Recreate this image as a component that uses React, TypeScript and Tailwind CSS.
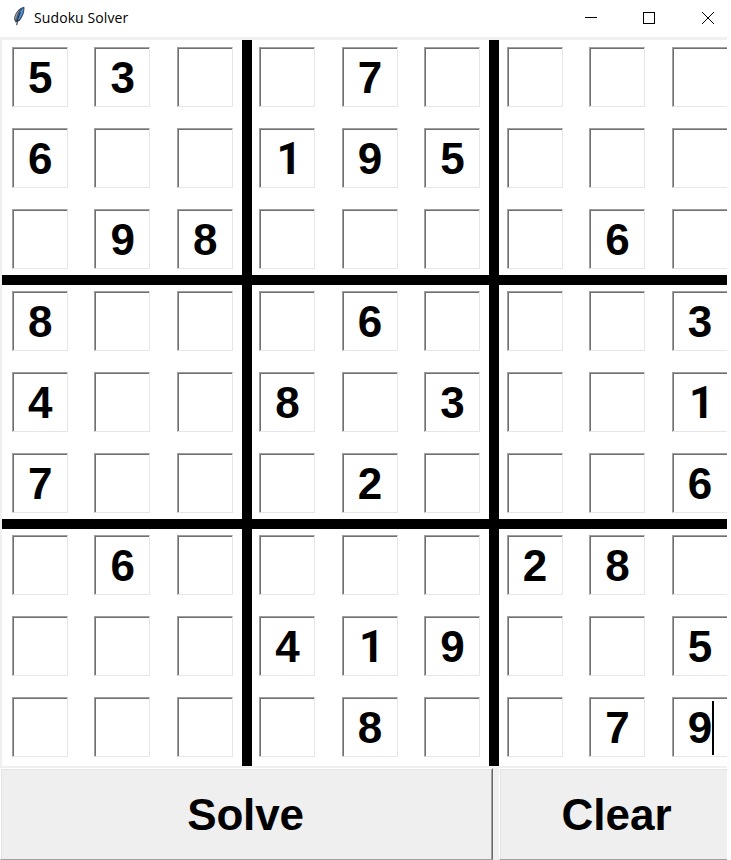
const puzzle = [
  '53..7....',
  '6..195...',
  '.98....6.',
  '8...6...3',
  '4..8.3..1',
  '7...2...6',
  '.6....28.',
  '...419..5',
  '....8..79',
];

const bandLeft = ['pl-[9.7px]', 'pl-[7.1px]', 'pl-[7.6px]'];
const bandTop = ['pt-[7px]', 'pt-[5.7px]', 'pt-[5.5px]'];

function Feather() {
  return (
    <svg className="ml-3 h-5 w-4 shrink-0" viewBox="0 0 16 20">
      <path d="M12.3 .8C7.5 1.6 2.6 6.6 2 13L3.6 16.5L7.5 15C10.8 11 13 6 12.3 .8Z" fill="#3b4a5a" />
      <path d="M11.4 2C8.4 4 5.8 9 4.6 14.5L7 13.8C9.9 10.2 11.8 6 11.4 2Z" fill="#4f8fdc" />
      <path d="M8 3.6C4.9 6 3 9.6 2.9 13L4.1 13.8C4.7 10.2 6 6.8 8 3.6Z" fill="#8d979e" />
      <path d="M8.4 6.5C6.5 9.8 5.3 14 4.8 19.2" fill="none" stroke="#17202b" strokeWidth="1" />
    </svg>
  );
}

function Cell({ value, focused }: { value: string; focused: boolean }) {
  return (
    <div className="flex h-[60px] w-14 border-t border-l border-[#a0a0a0] border-r border-b border-r-[#e6e6e6] border-b-[#e6e6e6]">
      <div className="flex w-full items-center justify-center border-t border-l border-[#707070] pt-px text-[44px] leading-none font-bold">
        <span className={value === '1' ? "pl-[3px] font-['Roboto',sans-serif]" : 'relative'}>
          {value === '.' ? '' : value}
          {focused && <span className="absolute top-[-5px] right-[-2px] h-[54px] w-[2px] bg-black" />}
        </span>
      </div>
    </div>
  );
}

function Box({ row, col }: { row: number; col: number }) {
  return (
    <div
      className={`grid grid-cols-[56px_56px_56px] content-start gap-x-[26.5px] gap-y-[21.2px] overflow-hidden bg-white ${bandLeft[col]} ${bandTop[row]}`}
    >
      {[0, 1, 2].flatMap((r) =>
        [0, 1, 2].map((c) => {
          const y = row * 3 + r;
          const x = col * 3 + c;
          return <Cell key={`${y}${x}`} value={puzzle[y][x]} focused={y === 8 && x === 8} />;
        }),
      )}
    </div>
  );
}

export default function App() {
  return (
    <div className="flex h-[860px] w-[731px] flex-col overflow-hidden bg-white font-['Liberation_Sans',Arial,sans-serif] text-black">
      <header className="flex h-[37px] shrink-0 items-start pt-[6px]">
        <Feather />
        <h1 className="mt-[2px] ml-[6px] w-[200px] font-['Open_Sans',sans-serif] text-[14px] leading-5 tracking-[0.1px]">
          Sudoku Solver
        </h1>
        <svg className="ml-auto h-5 w-[146px]" viewBox="0 0 146 20" fill="none" stroke="black" shapeRendering="crispEdges">
          <path d="M0 11.5H12" />
          <rect x="58.5" y="6.5" width="11" height="11" />
          <path d="M117 6L129 18M129 6L117 18" shapeRendering="auto" />
        </svg>
      </header>
      <main className="flex w-[727px] flex-1 flex-col overflow-hidden bg-[#f0f0f0]">
        <div className="mt-[3px] ml-[2px] grid h-[726px] w-[725px] shrink-0 grid-cols-[240px_237px_228px] grid-rows-[235px_234px_237px] gap-[10px] bg-black">
          {[0, 1, 2].flatMap((row) => [0, 1, 2].map((col) => <Box key={`${row}${col}`} row={row} col={col} />))}
        </div>
        <div className="mt-[2px] flex h-[92px] shrink-0 gap-[6px] text-[44px] leading-none font-bold">
          <button className="flex h-[92px] w-[493px] border-t border-l border-white border-r border-b border-r-[#696969] border-b-[#a0a0a0]">
            <span className="flex h-full w-full items-center justify-center border-t border-l border-[#e3e3e3] border-r border-r-[#a0a0a0] bg-[#efefef] pt-px pr-[2px] tracking-[-0.2px]">
              Solve
            </span>
          </button>
          <button className="flex h-[92px] w-[228px] border-t border-l border-white border-b border-b-[#a0a0a0]">
            <span className="flex h-full w-full items-center justify-center border-t border-l border-[#e3e3e3] bg-[#efefef] pt-px pl-[5px]">
              Clear
            </span>
          </button>
        </div>
      </main>
    </div>
  );
}
